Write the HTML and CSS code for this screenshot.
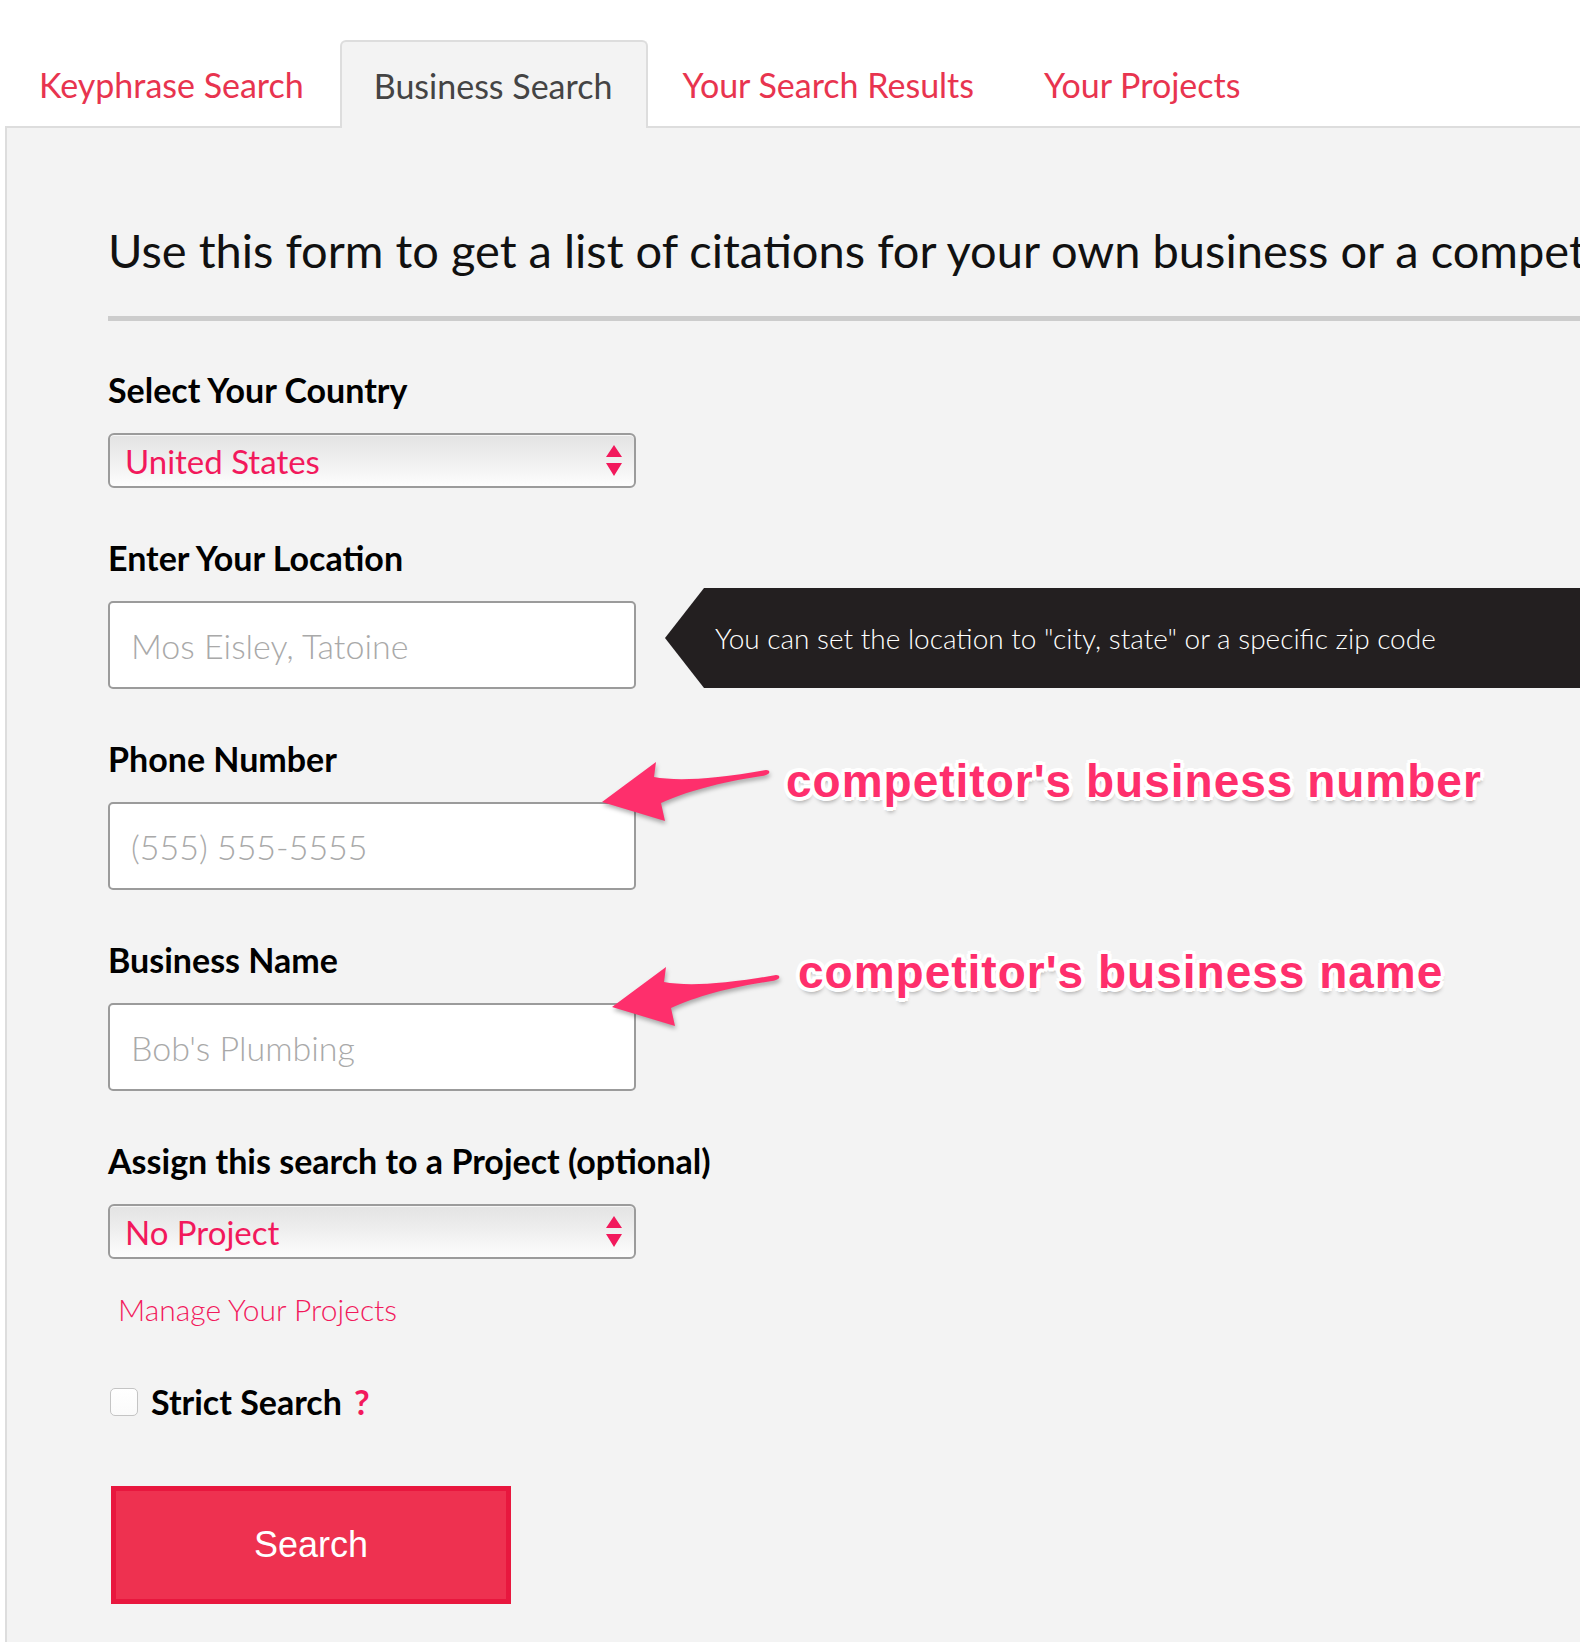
FILE: index.html
```html
<!DOCTYPE html>
<html lang="en">
<head>
<meta charset="utf-8">
<title>Business Search</title>
<link rel="stylesheet" href="styles.css">
</head>
<body>
<div class="page">
  <nav class="tabs">
    <a class="tab" href="#">Keyphrase Search</a>
    <a class="tab tab-active" href="#">Business Search</a>
    <a class="tab" href="#">Your Search Results</a>
    <a class="tab" href="#">Your Projects</a>
  </nav>

  <main class="panel">
    <h1 class="intro">Use this form to get a list of citations for your own business or a competitor's business.</h1>
    <hr class="divider">

    <form class="form">
      <div class="field">
        <label class="field-label">Select Your Country</label>
        <div class="select-wrap">
          <select class="select"><option>United States</option></select>
          <svg class="select-arrows" viewBox="0 0 16 32" width="16" height="32"><path d="M8 0 L16 12 L0 12 Z M0 18 L16 18 L8 31 Z" fill="#f2195c"/></svg>
        </div>
      </div>

      <div class="field">
        <label class="field-label">Enter Your Location</label>
        <div class="input-wrap">
          <input class="text-input" type="text" placeholder="Mos Eisley, Tatoine">
          <div class="tip">You can set the location to "city, state" or a specific zip code</div>
        </div>
      </div>

      <div class="field">
        <label class="field-label">Phone Number</label>
        <input class="text-input" type="text" placeholder="(555) 555-5555">
      </div>

      <div class="field">
        <label class="field-label">Business Name</label>
        <input class="text-input" type="text" placeholder="Bob's Plumbing">
      </div>

      <div class="field field-last">
        <label class="field-label">Assign this search to a Project (optional)</label>
        <div class="select-wrap">
          <select class="select"><option>No Project</option></select>
          <svg class="select-arrows" viewBox="0 0 16 32" width="16" height="32"><path d="M8 0 L16 12 L0 12 Z M0 18 L16 18 L8 31 Z" fill="#f2195c"/></svg>
        </div>
        <a class="manage" href="#">Manage Your Projects</a>
      </div>

      <div class="strict">
        <input class="checkbox" type="checkbox" id="strict">
        <label class="strict-label" for="strict">Strict Search</label>
        <span class="help">?</span>
      </div>

      <button class="search-btn" type="button">Search</button>
    </form>
  </main>

  <svg class="arrow arrow-number" viewBox="0 0 190 80" width="190" height="80"><path d="M12 52 L66 12 L64 27 C85 31 120 30 176 20 C181 20 181 25 172 26 C130 32 95 42 71 53 L75 71 Z" fill="#fe2f6c"/></svg>
  <div class="note note-number">competitor's business number</div>

  <svg class="arrow arrow-name" viewBox="0 0 190 80" width="190" height="80"><path d="M12 52 L66 12 L64 27 C85 31 120 30 176 20 C181 20 181 25 172 26 C130 32 95 42 71 53 L75 71 Z" fill="#fe2f6c"/></svg>
  <div class="note note-name">competitor's business name</div>
</div>
</body>
</html>
```
FILE: styles.css
```css
* { box-sizing: border-box; }

html, body {
  margin: 0;
  padding: 0;
  overflow: hidden;
}

body {
  background: #fff;
  font-family: Lato, "Noto Sans", sans-serif;
  color: #000;
}

.page {
  position: relative;
  width: 1580px;
  height: 1642px;
  overflow: hidden;
}

/* Tabs */
.tabs {
  display: flex;
  align-items: flex-end;
  height: 126px;
  padding: 40px 0 0 5px;
}

.tab {
  display: flex;
  align-items: center;
  height: 86px;
  padding: 0 34px 0 32px;
  border: 2px solid transparent;
  border-bottom: 0;
  border-radius: 6px 6px 0 0;
  font-size: 34px;
  font-weight: 400;
  color: #e8344f;
  text-decoration: none;
  white-space: nowrap;
}

.tab-active {
  position: relative;
  z-index: 1;
  height: 88px;
  margin-bottom: -2px;
  background: #f3f3f3;
  border-color: #ddd;
  color: #444;
}

/* Panel */
.panel {
  margin-left: 5px;
  min-height: 1516px;
  padding: 92px 0 60px 101px;
  background: #f3f3f3;
  border-top: 2px solid #ddd;
  border-left: 2px solid #ddd;
}

.intro {
  margin: 0 0 36px;
  font-size: 47px;
  font-weight: 400;
  line-height: 60px;
  color: #111;
  white-space: nowrap;
}

.divider {
  height: 0;
  margin: 0 0 49px;
  border: 0;
  border-top: 5px solid #ccc;
}

.field {
  margin-bottom: 50px;
}

.field-last {
  margin-bottom: 53px;
}

.field-label {
  display: block;
  margin-bottom: 23px;
  font-size: 34px;
  font-weight: 700;
  line-height: 40px;
  color: #000;
  white-space: nowrap;
}

.select-wrap {
  position: relative;
  width: 528px;
  height: 55px;
}

.select {
  -webkit-appearance: none;
  appearance: none;
  display: block;
  width: 100%;
  height: 55px;
  margin: 0;
  padding: 0 40px 0 15px;
  border: 2px solid #9b9b9b;
  border-radius: 6px;
  background: linear-gradient(#e3e3e3, #eeeeee 45%, #fdfdfd);
  box-shadow: inset 0 1px 0 #f6f6f6;
  font-family: Lato, "Noto Sans", sans-serif;
  font-size: 33px;
  font-weight: 400;
  color: #f2195c;
}

.select-arrows {
  position: absolute;
  top: 12px;
  right: 14px;
  pointer-events: none;
}

.input-wrap {
  position: relative;
  width: 528px;
}

.text-input {
  display: block;
  width: 528px;
  height: 88px;
  margin: 0;
  padding: 0 21px;
  border: 2px solid #9b9b9b;
  border-radius: 5px;
  background: #fff;
  font-family: Lato, "Noto Sans", sans-serif;
  font-size: 34px;
  font-weight: 300;
  color: #333;
}

.text-input::placeholder {
  color: #a9a9a9;
}

.tip {
  position: absolute;
  top: -13px;
  left: calc(100% + 68px);
  display: flex;
  align-items: center;
  width: 1000px;
  height: 100px;
  padding-left: 11px;
  background: #231f20;
  color: #fff;
  font-size: 28px;
  font-weight: 300;
  white-space: nowrap;
}

.tip::before {
  content: "";
  position: absolute;
  top: 0;
  left: -39px;
  border-right: 39px solid #231f20;
  border-top: 50px solid transparent;
  border-bottom: 50px solid transparent;
}

.manage {
  display: inline-block;
  margin-top: 30px;
  padding-left: 10px;
  font-size: 30px;
  font-weight: 300;
  line-height: 40px;
  color: #f2195c;
  text-decoration: none;
}

.strict {
  display: flex;
  align-items: center;
  height: 40px;
}

.checkbox {
  -webkit-appearance: none;
  appearance: none;
  width: 28px;
  height: 28px;
  margin: 0 13px 0 2px;
  border: 1px solid #c4c4c4;
  border-radius: 5px;
  background: linear-gradient(#fff, #fafafa);
}

.strict-label {
  font-size: 34px;
  font-weight: 700;
  line-height: 40px;
  color: #000;
}

.help {
  margin-left: 12px;
  font-size: 34px;
  font-weight: 700;
  line-height: 40px;
  color: #f2195c;
}

.search-btn {
  display: block;
  width: 400px;
  height: 118px;
  margin: 64px 0 0 3px;
  padding: 0;
  border: 5px solid #e8173e;
  border-radius: 0;
  background: #ee3150;
  color: #fff;
  font-family: "Liberation Sans", Arial, sans-serif;
  font-size: 36px;
  font-weight: 400;
}

/* Annotations laid over the form */
.arrow {
  position: absolute;
  overflow: visible;
  filter: drop-shadow(1px 3px 2px rgba(0, 0, 0, 0.3));
}

.arrow-number { left: 590px; top: 750px; }
.arrow-name { left: 600px; top: 955px; }

.note {
  position: absolute;
  font-family: "Liberation Sans", Arial, sans-serif;
  font-size: 46px;
  font-weight: 700;
  line-height: 48px;
  letter-spacing: 1px;
  color: #fe2f6c;
  white-space: nowrap;
  text-shadow:
    4px 0 0 #fff, -4px 0 0 #fff, 0 4px 0 #fff, 0 -4px 0 #fff,
    3px 3px 0 #fff, -3px -3px 0 #fff, 3px -3px 0 #fff, -3px 3px 0 #fff,
    1px 5px 4px rgba(0, 0, 0, 0.35);
}

.note-number { left: 786px; top: 757px; }
.note-name { left: 798px; top: 948px; }
```
